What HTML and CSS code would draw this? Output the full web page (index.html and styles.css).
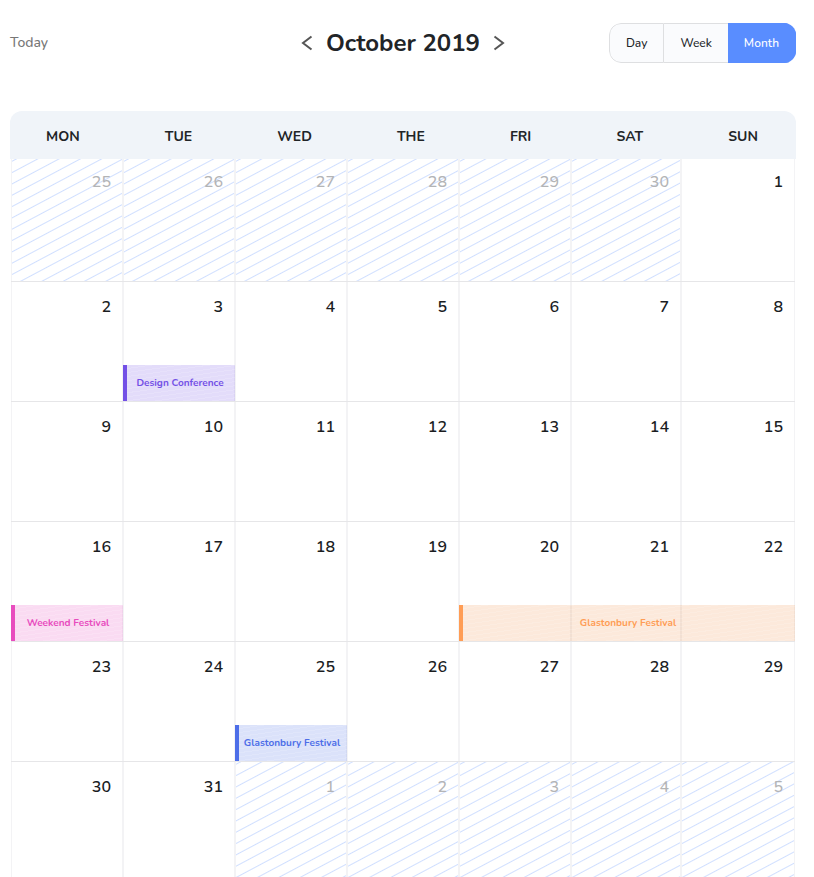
FILE: index.html
```html
<!DOCTYPE html>
<html lang="en">
<head>
<meta charset="utf-8">
<meta name="viewport" content="width=device-width, initial-scale=1">
<title>October 2019</title>
<link rel="stylesheet" href="styles.css">
</head>
<body>
<main class="page">
  <header class="toolbar">
    <button class="today" type="button">Today</button>
    <div class="period">
      <button class="arrow" type="button" aria-label="Previous month"><svg width="12" height="16" viewBox="0 0 12 16"><path d="M10.500 1.500 2 8l8.500 6.500"/></svg></button>
      <h1 class="title">October 2019</h1>
      <button class="arrow" type="button" aria-label="Next month"><svg width="12" height="16" viewBox="0 0 12 16"><path d="M1.500 1.500 10 8l-8.500 6.500"/></svg></button>
    </div>
    <div class="views">
      <button class="view" type="button">Day</button>
      <button class="view" type="button">Week</button>
      <button class="view active" type="button" aria-pressed="true">Month</button>
    </div>
  </header>
  <table class="calendar">
    <thead>
      <tr class="weekdays"><th>MON</th><th>TUE</th><th>WED</th><th>THE</th><th>FRI</th><th>SAT</th><th>SUN</th></tr>
    </thead>
    <tbody>
      <tr class="week first"><td class="out">25</td><td class="out">26</td><td class="out">27</td><td class="out">28</td><td class="out">29</td><td class="out">30</td><td>1</td></tr>
      <tr class="week"><td>2</td><td>3<a class="event purple" href="#">Design Conference</a></td><td>4</td><td>5</td><td>6</td><td>7</td><td>8</td></tr>
      <tr class="week"><td>9</td><td>10</td><td>11</td><td>12</td><td>13</td><td>14</td><td>15</td></tr>
      <tr class="week"><td>16<a class="event pink" href="#">Weekend Festival</a></td><td>17</td><td>18</td><td>19</td><td>20<a class="event orange days-3" href="#">Glastonbury Festival</a></td><td>21</td><td>22</td></tr>
      <tr class="week"><td>23</td><td>24</td><td>25<a class="event blue" href="#">Glastonbury Festival</a></td><td>26</td><td>27</td><td>28</td><td>29</td></tr>
      <tr class="week"><td>30</td><td>31</td><td class="out">1</td><td class="out">2</td><td class="out">3</td><td class="out">4</td><td class="out">5</td></tr>
    </tbody>
  </table>
</main>
</body>
</html>
```
FILE: styles.css
```css
* { box-sizing: border-box; }

body {
  margin: 0;
  height: 100vh;
  overflow: hidden;
  background: #fff;
  color: #212427;
  font-family: Nunito, Lato, sans-serif;
}

button {
  margin: 0;
  padding: 0;
  border: 0;
  background: none;
  color: inherit;
  font: inherit;
  cursor: pointer;
}

.page { padding: 23px 18px 0 10px; }

.toolbar {
  display: grid;
  grid-template-columns: 1fr auto 1fr;
  align-items: center;
  margin-bottom: 48px;
}

.today {
  justify-self: start;
  color: #777;
  font-size: 14px;
  font-weight: 500;
  line-height: 22px;
}

.period {
  display: flex;
  align-items: center;
  gap: 13px;
}

.title {
  margin: 0;
  font-size: 24px;
  font-weight: 700;
  line-height: 32px;
}

.arrow { display: flex; }

.arrow svg {
  fill: none;
  stroke: #555;
  stroke-width: 2;
}

.views {
  display: flex;
  justify-self: end;
  height: 40px;
  overflow: hidden;
  border-radius: 12px;
}

.view {
  padding: 0 16px;
  border: 1px solid #dedfe1;
  border-left-width: 0;
  background: #fafbfd;
  font-size: 12px;
  font-weight: 500;
}

.view:first-child {
  border-left-width: 1px;
  border-radius: 12px 0 0 12px;
}

.view:nth-child(2) { border-right-width: 0; }

.view.active {
  border-color: #598dff;
  background: #598dff;
  color: #fff;
}

.calendar { display: block; }
.calendar thead { display: block; }

.calendar tbody {
  display: block;
  margin: 0 1px;
}

.weekdays {
  display: flex;
  align-items: center;
  justify-content: space-between;
  height: 48px;
  padding: 2px 38px 0 36px;
  border-radius: 12px 12px 0 0;
  background: #f0f4f9;
}

.weekdays th {
  padding: 0;
  font-size: 14px;
  font-weight: 700;
}

.week {
  display: grid;
  grid-template-columns: repeat(5, 112fr) 110fr 114fr;
  min-height: 120px;
  border-bottom: 1px solid #e6e6e8;
}

.week.first { min-height: 123px; }

.week td {
  position: relative;
  padding: 12px 11px 0;
  border: solid #f3f3f5;
  border-width: 0 1px;
  color: #1b1d1f;
  font-size: 16px;
  font-weight: 600;
  line-height: 26px;
  text-align: right;
}

.week.first td { padding-top: 10px; }

.week td.out {
  background: repeating-linear-gradient(152deg, transparent 0 1px, #d0dfff 2px, transparent 3px 10px) padding-box;
  color: #b3b4b6;
  font-weight: 500;
}

.event {
  position: absolute;
  z-index: 1;
  right: -1px;
  bottom: 0;
  left: -1px;
  height: 36px;
  padding-right: 2px;
  border-left: 4px solid;
  background: repeating-linear-gradient(172deg, transparent 0 3px, rgba(255, 255, 255, 0.15) 3px 4px), var(--tint);
  font-size: 10px;
  font-weight: 700;
  line-height: 36px;
  text-align: center;
  text-decoration: none;
  white-space: nowrap;
}

.days-3 {
  right: auto;
  width: calc(300% + 6px);
}

.purple { --tint: rgba(115, 80, 230, 0.2); color: #7350e6; }
.pink { --tint: rgba(232, 76, 190, 0.2); color: #e84cbe; }
.orange { --tint: rgba(240, 132, 54, 0.18); color: #ff9d55; }
.blue { --tint: rgba(77, 110, 232, 0.2); color: #4d6ee8; }
```
